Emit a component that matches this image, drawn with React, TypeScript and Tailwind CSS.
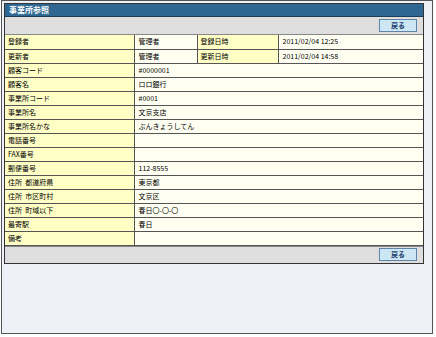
import React from "react";

const rows: { label: string; value: string }[] = [
  { label: "顧客コード", value: "#0000001" },
  { label: "顧客名", value: "ロロ銀行" },
  { label: "事業所コード", value: "#0001" },
  { label: "事業所名", value: "文京支店" },
  { label: "事業所名かな", value: "ぶんきょうしてん" },
  { label: "電話番号", value: "" },
  { label: "FAX番号", value: "" },
  { label: "郵便番号", value: "112-8555" },
  { label: "住所 都道府県", value: "東京都" },
  { label: "住所 市区町村", value: "文京区" },
  { label: "住所 町域以下", value: "春日〇-〇-〇" },
  { label: "最寄駅", value: "春日" },
  { label: "備考", value: "" },
];

const font = { fontFamily: '"Noto Sans CJK JP", "Liberation Sans", sans-serif' };

function Btn() {
  return (
    <div className="w-[38px] h-[13px] bg-[#cde6f4] border border-[#5f86a8] flex items-center justify-center text-[7px] leading-none font-bold text-[#1d3f6e]">
      戻る
    </div>
  );
}

export default function App() {
  const lab = "bg-[#ffffc6] border-b border-r border-[#555] pl-[3px] align-middle";
  const val = "bg-[#fffff2] border-b border-[#555] pl-[4px] align-middle";
  return (
    <div className="w-[436px] h-[337px] bg-white" style={font}>
      <div className="ml-[1px] w-[432px] h-[334px] border border-[#555] bg-[#eef2f6] pt-[2px] pl-[2px]">
        <div className="w-[420px] border border-[#333] bg-white">
          <div className="h-[13px] bg-[#2e6892] border-b border-[#1b3d58] text-white text-[8px] leading-[12px] font-bold pl-[4px]">
            事業所参照
          </div>
          <div className="h-[18px] bg-[#dedede] border-b border-[#888] flex items-center justify-end pr-[6px]">
            <Btn />
          </div>
          <table className="w-full border-collapse text-[7px] leading-none text-black table-fixed">
            <colgroup>
              <col className="w-[129px]" />
              <col className="w-[63px]" />
              <col className="w-[81px]" />
              <col />
            </colgroup>
            <tbody>
              <tr className="h-[14px]">
                <td className={lab}>登録者</td>
                <td className={val + " border-r"}>管理者</td>
                <td className={lab}>登録日時</td>
                <td className={val}>2011/02/04 12:25</td>
              </tr>
              <tr className="h-[14px]">
                <td className={lab}>更新者</td>
                <td className={val + " border-r"}>管理者</td>
                <td className={lab}>更新日時</td>
                <td className={val}>2011/02/04 14:58</td>
              </tr>
              {rows.map((r) => (
                <tr key={r.label} className="h-[14px]">
                  <td className={lab + " whitespace-pre"}>{r.label.replace(" ", "  ")}</td>
                  <td className={val} colSpan={3}>
                    {r.value}
                  </td>
                </tr>
              ))}
            </tbody>
          </table>
          <div className="h-[17px] bg-[#dedede] border-t border-[#888] flex items-center justify-end pr-[6px]">
            <Btn />
          </div>
        </div>
      </div>
    </div>
  );
}
